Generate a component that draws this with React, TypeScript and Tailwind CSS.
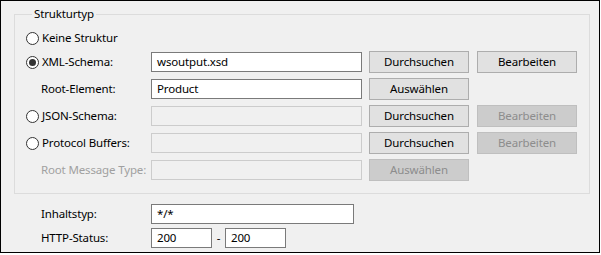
import React from "react";

function Radio({ checked, label }: { checked?: boolean; label: string }) {
  return (
    <div className="flex items-center h-[22px]">
      <span className="w-[13px] h-[13px] rounded-full border border-[#333333] bg-white flex items-center justify-center shrink-0">
        {checked && <span className="w-[7px] h-[7px] rounded-full bg-[#333333]" />}
      </span>
      <span className="ml-[3px] whitespace-nowrap">{label}</span>
    </div>
  );
}

function Input({ value, disabled, w }: { value?: string; disabled?: boolean; w: string }) {
  return (
    <div
      className={
        "h-[20px] flex items-center pl-[5px] border " +
        w +
        " " +
        (disabled ? "border-[#cccccc] bg-[#f0f0f0]" : "border-[#7a7a7a] bg-white")
      }
    >
      {value}
    </div>
  );
}

function Btn({ label, disabled }: { label: string; disabled?: boolean }) {
  return (
    <div
      className={
        "w-[100px] h-[22px] flex items-center justify-center border " +
        (disabled ? "border-[#bfbfbf] bg-[#cccccc] text-[#8d8d8d]" : "border-[#adadad] bg-[#e1e1e1] text-black")
      }
    >
      {label}
    </div>
  );
}

export default function App() {
  return (
    <div className="w-[600px] h-[253px] border border-black bg-[#f0f0f0] text-[11.5px] tracking-[-0.15px] leading-[16px] text-black font-['Noto_Sans',sans-serif]">
      <fieldset className="ml-[13px] mt-[5px] w-[576px] border border-[#dcdcdc] pl-[11px] pb-[12px]">
        <legend className="ml-[6px] px-[2px] leading-[16px]">Strukturtyp</legend>
        <div className="mt-[5px]">
          <Radio label="Keine Struktur" />
        </div>
        <div className="mt-[2px] flex flex-col gap-[5px]">
          <div className="flex items-center">
            <div className="w-[125px]">
              <Radio checked label="XML-Schema:" />
            </div>
            <Input w="w-[211px]" value="wsoutput.xsd" />
            <div className="ml-[7px]"><Btn label="Durchsuchen" /></div>
            <div className="ml-[8px]"><Btn label="Bearbeiten" /></div>
          </div>
          <div className="flex items-center h-[22px]">
            <div className="w-[125px] pl-[15px]">Root-Element:</div>
            <Input w="w-[211px]" value="Product" />
            <div className="ml-[7px]"><Btn label="Auswählen" /></div>
          </div>
          <div className="flex items-center">
            <div className="w-[125px]">
              <Radio label="JSON-Schema:" />
            </div>
            <Input w="w-[211px]" disabled />
            <div className="ml-[7px]"><Btn label="Durchsuchen" /></div>
            <div className="ml-[8px]"><Btn label="Bearbeiten" disabled /></div>
          </div>
          <div className="flex items-center">
            <div className="w-[125px]">
              <Radio label="Protocol Buffers:" />
            </div>
            <Input w="w-[211px]" disabled />
            <div className="ml-[7px]"><Btn label="Durchsuchen" /></div>
            <div className="ml-[8px]"><Btn label="Bearbeiten" disabled /></div>
          </div>
          <div className="flex items-center h-[22px]">
            <div className="w-[125px] pl-[15px] text-[#a0a0a0] whitespace-nowrap">Root Message Type:</div>
            <Input w="w-[211px]" disabled />
            <div className="ml-[7px]"><Btn label="Auswählen" disabled /></div>
          </div>
        </div>
      </fieldset>
      <div className="mt-[10px] flex flex-col gap-[4px]">
        <div className="flex items-center">
          <div className="w-[150px] pl-[40px]">Inhaltstyp:</div>
          <Input w="w-[203px]" value="*/*" />
        </div>
        <div className="flex items-center">
          <div className="w-[150px] pl-[40px]">HTTP-Status:</div>
          <Input w="w-[61px]" value="200" />
          <div className="w-[13px] text-center">-</div>
          <Input w="w-[61px]" value="200" />
        </div>
      </div>
    </div>
  );
}
